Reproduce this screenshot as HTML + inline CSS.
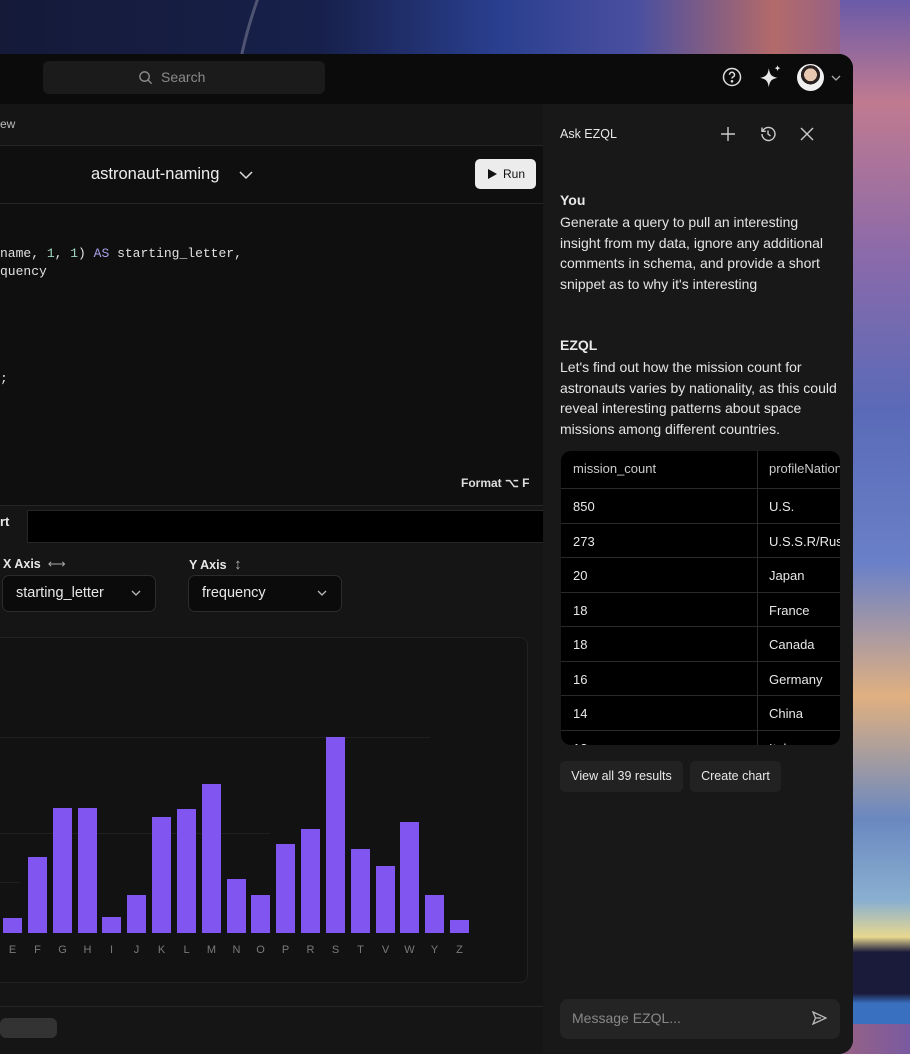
<!DOCTYPE html>
<html><head><style>
*{margin:0;padding:0;box-sizing:border-box}
body{width:910px;height:1024px;overflow:hidden;position:relative;font-family:"Liberation Sans",sans-serif;color:#e8e8e8;
background:linear-gradient(90deg,#141a38 0%,#17204a 35%,#2a3f8f 55%,#4a4fa0 70%,#b36a6a 85%,#7a5aa0 100%)}
.bgr{position:absolute;left:840px;top:0;width:70px;height:1024px;background:linear-gradient(180deg,#6a5aa8 0%,#c07a90 10%,#8a6aaa 25%,#5a6ab8 40%,#6a80c8 55%,#e0b080 68%,#6a88c0 80%,#8ab0d0 88%,#e8d890 91.5%,#1a1a3a 93%,#1a1a3a 97%,#3a70c0 98%)}
.arc{position:absolute;left:230px;top:-300px;width:900px;height:900px;border-radius:50%;border:3px solid #8a8aa0;opacity:.5}
.win{position:absolute;left:-20px;top:54px;width:873px;height:1000px;background:#0d0d0d;border-radius:14px;overflow:hidden}
.top{position:absolute;left:0;top:0;width:873px;height:50px;background:#0b0b0b}
.search{position:absolute;left:63px;top:7px;width:282px;height:33px;background:#1b1b1b;border-radius:6px;color:#8a8a8a;font-size:14px;line-height:33px;padding-left:118px}
.left{position:absolute;left:0;top:50px;width:563px;height:950px;background:#151515}
.right{position:absolute;left:563px;top:50px;width:310px;height:950px;background:#181818}
.abs{position:absolute}
.mono{font-family:"Liberation Mono",monospace;font-size:13px;color:#e0e0e0}
.tbl{position:absolute;left:561px;top:451px;width:279px;height:294px;background:#000;border-radius:10px;overflow:hidden;font-size:13px}
.row{position:absolute;left:0;width:279px;height:34.5px;border-top:1px solid #2a2a2a}
.row span{position:absolute;top:10px}
.bar{position:absolute;width:19px;background:#8155f0;bottom:91px}
.lbl{position:absolute;top:944px;font-size:11px;color:#7a7a7a;width:19px;text-align:center}
</style></head><body>
<div class="arc"></div>
<div class="bgr"></div>
<div class="win">
 <div class="top">
  <div class="search"><svg class="abs" style="left:95px;top:9px" width="15" height="15" viewBox="0 0 16 16" fill="none" stroke="#8a8a8a" stroke-width="1.5"><circle cx="7" cy="7" r="5"/><path d="M11 11l3.5 3.5"/></svg>Search</div>
  <svg class="abs" style="left:742px;top:13px" width="20" height="20" viewBox="0 0 20 20" fill="none" stroke="#ddd" stroke-width="1.5"><circle cx="10" cy="10" r="8.5"/><path d="M7.5 7.8a2.5 2.5 0 1 1 3.3 2.3c-.6.3-.8.7-.8 1.4"/><circle cx="10" cy="14.3" r=".6" fill="#ddd"/></svg>
  <svg class="abs" style="left:779px;top:11px" width="24" height="24" viewBox="0 0 22 22" fill="#e8e8e8"><path d="M9 3C10 9 11.2 10.5 17 11.8 11.2 13 10 14.5 9 20.5 8 14.5 6.8 13 1 11.8 6.8 10.5 8 9 9 3Z"/><path d="M17 0c.4 2 .9 2.5 3 2.9-2.1.4-2.6.9-3 2.9-.4-2-.9-2.5-3-2.9 2.1-.4 2.6-.9 3-2.9Z"/></svg>
  <div class="abs" style="left:817px;top:10px;width:27px;height:27px;border-radius:50%;background:radial-gradient(circle at 50% 40%,#e8c8b0 0 30%,#2a2220 31% 45%,#f0f0f0 46%)"></div>
  <svg class="abs" style="left:851px;top:20px" width="10" height="8" viewBox="0 0 10 8" fill="none" stroke="#aaa" stroke-width="1.3"><path d="M1 2l4 4 4-4"/></svg>
 </div>
 <div class="left">
  <div class="abs" style="left:20px;top:13px;font-size:12px;color:#bbb">ew</div>
  <div class="abs" style="left:0;top:41px;width:563px;height:360px;background:#0f0f0f;border-top:1px solid #262626">
   <div class="abs" style="left:0;top:57px;width:563px;border-top:1px solid #262626"></div>
   <div class="abs" style="left:111px;top:19px;font-size:16.5px;color:#eee">astronaut-naming</div>
   <svg class="abs" style="left:258px;top:23px" width="16" height="12" viewBox="0 0 16 12" fill="none" stroke="#ddd" stroke-width="1.5"><path d="M2 3l6 6 6-6"/></svg>
   <div class="abs" style="left:495px;top:13px;width:61px;height:30px;background:#ececec;border-radius:5px;color:#111;font-size:12px;line-height:30px;padding-left:28px">Run<svg class="abs" style="left:12px;top:10px" width="10" height="10" viewBox="0 0 10 10"><path d="M1 0L10 5 1 10Z" fill="#111"/></svg></div>
   <div class="mono abs" style="left:20px;top:100px">name, <span style="color:#9fd8c0">1</span>, <span style="color:#9fd8c0">1</span>) <span style="color:#a9a3e8">AS</span> starting_letter,</div>
   <div class="mono abs" style="left:20px;top:118px">quency</div>
   <div class="mono abs" style="left:20px;top:225px">;</div>
   <div class="abs" style="left:481px;top:330px;font-size:12px;color:#ddd;font-weight:bold">Format ⌥ F</div>
  </div>
  <div class="abs" style="left:0;top:401px;width:563px;border-top:1px solid #262626"></div>
  <div class="abs" style="left:20px;top:410px;font-size:13px;font-weight:bold">rt</div>
  <div class="abs" style="left:47px;top:406px;width:516px;height:33px;background:#000;border-top:1px solid #262626;border-left:1px solid #262626;border-bottom:1px solid #262626"></div>
  <div class="abs" style="left:23px;top:452px;font-size:12.5px;font-weight:bold">X Axis <span style="font-weight:normal;color:#aaa">&nbsp;⟷</span></div>
  <div class="abs" style="left:209px;top:452px;font-size:12.5px;font-weight:bold">Y Axis <span style="font-weight:normal;color:#aaa;font-size:15px">&nbsp;↕</span></div>
  <div class="abs" style="left:22px;top:471px;width:154px;height:37px;border:1px solid #2c2c2c;border-radius:7px;background:#0b0b0b;font-size:14.5px;line-height:35px;padding-left:13px">starting_letter<svg class="abs" style="left:128px;top:14px" width="10" height="7" viewBox="0 0 10 7" fill="none" stroke="#bbb" stroke-width="1.3"><path d="M1 1l4 4 4-4"/></svg></div>
  <div class="abs" style="left:208px;top:471px;width:154px;height:37px;border:1px solid #2c2c2c;border-radius:7px;background:#0b0b0b;font-size:14.5px;line-height:35px;padding-left:13px">frequency<svg class="abs" style="left:128px;top:14px" width="10" height="7" viewBox="0 0 10 7" fill="none" stroke="#bbb" stroke-width="1.3"><path d="M1 1l4 4 4-4"/></svg></div>
  <div class="abs" style="left:0;top:533px;width:548px;height:346px;background:#121212;border:1px solid #222;border-radius:8px"></div>
  <div class="abs" style="left:0;top:633px;width:450px;border-top:1px solid #202020"></div>
  <div class="abs" style="left:0;top:729px;width:290px;border-top:1px solid #202020"></div>
  <div class="abs" style="left:0;top:778px;width:40px;border-top:1px solid #202020"></div>
  <div class="abs" style="left:0;top:902px;width:563px;border-top:1px solid #262626"></div>
  <div class="abs" style="left:20px;top:914px;width:57px;height:20px;background:#333;border-radius:6px"></div>
 </div>
 <div class="right">
  <div class="abs" style="left:17px;top:23px;font-size:12.5px">Ask EZQL</div>
  <svg class="abs" style="left:177px;top:22px" width="16" height="16" viewBox="0 0 16 16" stroke="#ccc" stroke-width="1.4"><path d="M8 1v14M1 8h14"/></svg>
  <svg class="abs" style="left:216px;top:21px" width="18" height="18" viewBox="0 0 18 18" fill="none" stroke="#ccc" stroke-width="1.4"><path d="M3 9a6.5 6.5 0 1 0 2-4.7L3 6.3M3 2.5v3.8h3.8"/><path d="M9 5.5V9l2.5 2"/></svg>
  <svg class="abs" style="left:257px;top:23px" width="14" height="14" viewBox="0 0 14 14" stroke="#ccc" stroke-width="1.4"><path d="M1 1l12 12M13 1L1 13"/></svg>
  <div class="abs" style="left:17px;top:88px;font-size:14px;font-weight:bold">You</div>
  <div class="abs" style="left:17px;top:108px;font-size:14px;line-height:20.7px;width:280px;color:#e4e4e4">Generate a query to pull an interesting insight from my data, ignore any additional comments in schema, and provide a short snippet as to why it's interesting</div>
  <div class="abs" style="left:17px;top:233px;font-size:14px;font-weight:bold">EZQL</div>
  <div class="abs" style="left:17px;top:253px;font-size:14px;line-height:20.7px;width:280px;color:#e4e4e4">Let's find out how the mission count for astronauts varies by nationality, as this could reveal interesting patterns about space missions among different countries.</div>
 </div>
</div>
<div class="tbl">
 <div class="abs" style="left:196px;top:0;height:294px;border-left:1px solid #2a2a2a"></div>
 <div class="row" style="top:0;border:0;height:37px"><span style="left:12px;top:10px;color:#ccc">mission_count</span><span style="left:208px;top:10px;color:#ccc">profileNationality</span></div>
 <div class="row" style="top:37px"><span style="left:12px">850</span><span style="left:208px">U.S.</span></div>
 <div class="row" style="top:71.5px"><span style="left:12px">273</span><span style="left:208px">U.S.S.R/Russia</span></div>
 <div class="row" style="top:106px"><span style="left:12px">20</span><span style="left:208px">Japan</span></div>
 <div class="row" style="top:140.5px"><span style="left:12px">18</span><span style="left:208px">France</span></div>
 <div class="row" style="top:175px"><span style="left:12px">18</span><span style="left:208px">Canada</span></div>
 <div class="row" style="top:209.5px"><span style="left:12px">16</span><span style="left:208px">Germany</span></div>
 <div class="row" style="top:244px"><span style="left:12px">14</span><span style="left:208px">China</span></div>
 <div class="row" style="top:278.5px"><span style="left:12px">12</span><span style="left:208px">Italy</span></div>
</div>
<div class="abs" style="left:560px;top:761px;width:123px;height:31px;background:#222;border-radius:5px;font-size:12.5px;line-height:31px;text-align:center">View all 39 results</div>
<div class="abs" style="left:690px;top:761px;width:91px;height:31px;background:#222;border-radius:5px;font-size:12.5px;line-height:31px;text-align:center">Create chart</div>
<div class="abs" style="left:560px;top:999px;width:280px;height:40px;background:#242424;border-radius:8px;font-size:14px;color:#888;padding:11px 12px">Message EZQL...</div>
<svg class="abs" style="left:812px;top:1011px" width="15" height="14" viewBox="0 0 15 14" fill="none" stroke="#bbb" stroke-width="1.3"><path d="M1 1l13 6-13 6 2.5-6zM3.5 7H9"/></svg>
<div class="bar" style="left:3px;height:15px"></div><div class="bar" style="left:28px;height:76px"></div><div class="bar" style="left:53px;height:125px"></div><div class="bar" style="left:78px;height:125px"></div><div class="bar" style="left:102px;height:16px"></div><div class="bar" style="left:127px;height:38px"></div><div class="bar" style="left:152px;height:116px"></div><div class="bar" style="left:177px;height:124px"></div><div class="bar" style="left:202px;height:149px"></div><div class="bar" style="left:227px;height:54px"></div><div class="bar" style="left:251px;height:38px"></div><div class="bar" style="left:276px;height:89px"></div><div class="bar" style="left:301px;height:104px"></div><div class="bar" style="left:326px;height:196px"></div><div class="bar" style="left:351px;height:84px"></div><div class="bar" style="left:376px;height:67px"></div><div class="bar" style="left:400px;height:111px"></div><div class="bar" style="left:425px;height:38px"></div><div class="bar" style="left:450px;height:13px"></div>
<div class="lbl" style="left:3px">E</div><div class="lbl" style="left:28px">F</div><div class="lbl" style="left:53px">G</div><div class="lbl" style="left:78px">H</div><div class="lbl" style="left:102px">I</div><div class="lbl" style="left:127px">J</div><div class="lbl" style="left:152px">K</div><div class="lbl" style="left:177px">L</div><div class="lbl" style="left:202px">M</div><div class="lbl" style="left:227px">N</div><div class="lbl" style="left:251px">O</div><div class="lbl" style="left:276px">P</div><div class="lbl" style="left:301px">R</div><div class="lbl" style="left:326px">S</div><div class="lbl" style="left:351px">T</div><div class="lbl" style="left:376px">V</div><div class="lbl" style="left:400px">W</div><div class="lbl" style="left:425px">Y</div><div class="lbl" style="left:450px">Z</div>
</body></html>
